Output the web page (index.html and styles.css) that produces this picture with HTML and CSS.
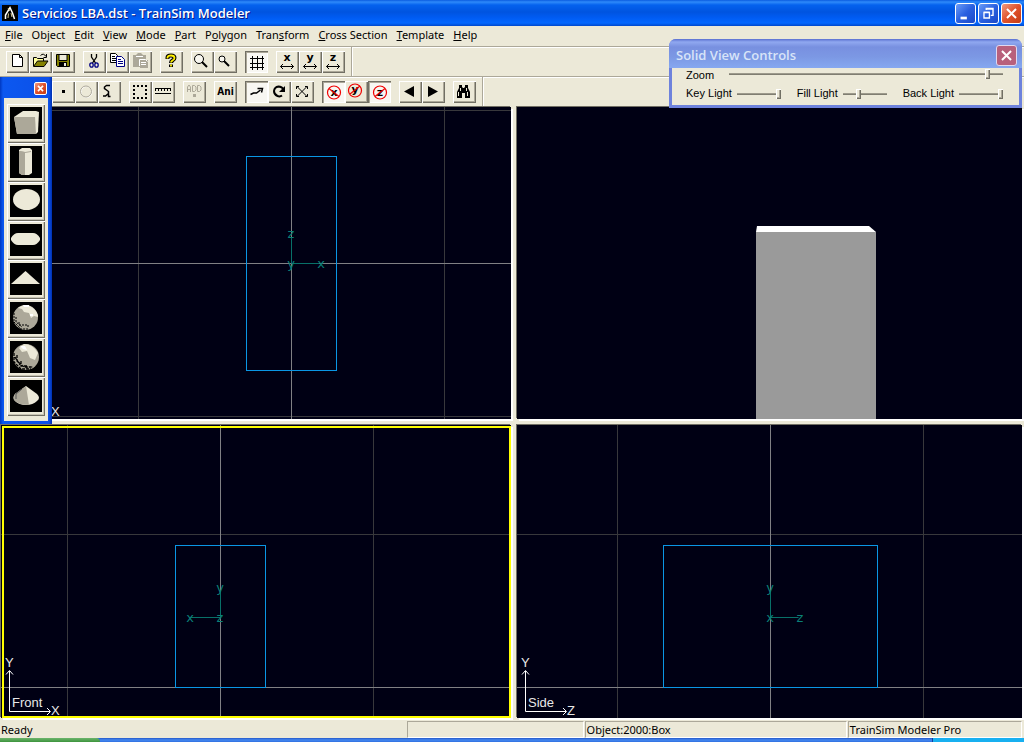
FILE: index.html
```html
<!DOCTYPE html>
<html lang="en">
<head>
<meta charset="utf-8">
<title>Servicios LBA.dst - TrainSim Modeler</title>
<link rel="stylesheet" href="styles.css">
</head>
<body>
<div class="app">
  <header class="titlebar">
    <svg class="app-icon" viewBox="0 0 16 16" aria-hidden="true"><rect width="16" height="16" fill="#000"/><path d="M3.500 14V10L8 2.500L10.500 8L12.500 14" fill="none" stroke="#fff" stroke-width="1.500"/><path d="M6 3L8 6M6.500 8.500L6 13M9 8L10 12" stroke="#d8c890" fill="none"/></svg>
    <h1 class="title">Servicios LBA.dst - TrainSim Modeler</h1>
    <div class="window-buttons">
      <button class="win-btn" aria-label="Minimize"><svg viewBox="0 0 21 21"><path d="M5 14h7v3H5z" fill="#fff"/></svg></button>
      <button class="win-btn" aria-label="Restore"><svg viewBox="0 0 21 21" fill="none" stroke="#fff"><path d="M8 6.500V5h7.500v7.500H13M8 5.500h7M5.500 9.500h6v6h-6zM5 9h7" stroke-width="1.500"/></svg></button>
      <button class="win-btn close" aria-label="Close"><svg viewBox="0 0 21 21"><path d="M5.500 5.500l10 10M15.500 5.500l-10 10" stroke="#fff" stroke-width="2.200"/></svg></button>
    </div>
  </header>

  <nav class="menubar" aria-label="Main menu">
    <button><u>F</u>ile</button><button>Object</button><button><u>E</u>dit</button><button><u>V</u>iew</button><button><u>M</u>ode</button><button><u>P</u>art</button><button>P<u>o</u>lygon</button><button>Tran<u>s</u>form</button><button><u>C</u>ross Section</button><button><u>T</u>emplate</button><button><u>H</u>elp</button>
  </nav>

  <div class="toolbar-row">
    <div class="toolbar">
      <div class="group">
        <button class="tool" aria-label="New"><svg viewBox="0 0 23 22"><path d="M6.500 3.500h7l3 3v9h-10zM13.500 3.500v3h3" fill="#fff" stroke="#000"/></svg></button>
        <button class="tool" aria-label="Open"><svg viewBox="0 0 23 22"><path d="M4.500 15V6.500h3l1 1h6V10" fill="#ffff9c" stroke="#000"/><path d="M4.500 15.500l4-5.500h10.500l-4 5.500z" fill="#848200" stroke="#000"/><path d="M11.500 4.500q3-3 5.500 1M17.500 3v3.500H14.500" fill="none" stroke="#000"/></svg></button>
        <button class="tool" aria-label="Save"><svg viewBox="0 0 23 22"><path d="M4.500 3.500h13v12h-12l-1-1z" fill="#848200" stroke="#000"/><path d="M7 3.500h8v6H7z" fill="#ece9d8" stroke="#000"/><path d="M7 11h8v5H7z" fill="#000"/><path d="M12 12h2v3h-2z" fill="#ece9d8"/></svg></button>
      </div>
      <div class="group">
        <button class="tool" aria-label="Cut"><svg viewBox="0 0 23 22" fill="none"><path d="M8.500 3v3l4 6M13.500 3v3l-4 6" stroke="#000" stroke-width="1.300"/><ellipse cx="8.500" cy="14" rx="1.700" ry="2.200" stroke="#000084" stroke-width="1.300"/><ellipse cx="13.500" cy="14" rx="1.700" ry="2.200" stroke="#000084" stroke-width="1.300"/></svg></button>
        <button class="tool" aria-label="Copy"><svg viewBox="0 0 23 22" fill="#fff"><path d="M4.500 2.500h5l2 2v7h-7z" stroke="#000"/><path d="M6 5.500h3M6 7.500h4M6 9.500h4" stroke="#000"/><path d="M10.500 5.500h5l3 3v7h-8z" stroke="#000084"/><path d="M12 8.500h3M12 10.500h5M12 12.500h5" stroke="#000084"/></svg></button>
        <button class="tool" aria-label="Paste" disabled><svg viewBox="0 0 23 22"><path d="M4 4h3l2-2h3l2 2h3v5h2v8h-8v-1H4z" fill="#aca899"/><path d="M7 5.500h7M12 11.500h5M12 13.500h5" stroke="#fff"/><path d="M10.500 15V8.500h6l2 2" fill="none" stroke="#fff"/></svg></button>
      </div>
      <div class="group">
        <button class="tool" aria-label="Help"><svg viewBox="0 0 23 22"><path d="M7.500 8V6.500Q7.500 4.500 11 4.500T14.500 7q0 1.500-2 2.500-1.500 1-1.500 2.500M11 13.500v2.500" fill="none" stroke="#000" stroke-width="4"/><path d="M7.500 7.500v-1Q7.500 4.500 11 4.500T14.500 7q0 1.500-2 2.500-1.500 1-1.500 2M11 13.500v2" fill="none" stroke="#ffef00" stroke-width="1.800"/></svg></button>
      </div>
      <div class="group">
        <button class="tool" aria-label="Zoom in"><svg viewBox="0 0 23 22"><circle cx="8" cy="8" r="4.500" fill="#f8f7f0" stroke="#000"/><path d="M11 11l5 5" stroke="#000" stroke-width="2"/></svg></button>
        <button class="tool" aria-label="Zoom out"><svg viewBox="0 0 23 22"><circle cx="8" cy="8" r="3" fill="#f8f7f0" stroke="#000"/><path d="M10 10l5 5" stroke="#000" stroke-width="2"/></svg></button>
      </div>
      <div class="group">
        <button class="tool pressed" aria-label="Grid" aria-pressed="true"><svg viewBox="0 0 23 22"><path d="M7.500 5v14M12.500 5v14M17.500 5v14M5 7.500h14M5 12.500h14M5 16.500h14" stroke="#000"/></svg></button>
      </div>
      <div class="group">
        <button class="tool" aria-label="Flip X"><svg viewBox="0 0 23 22"><text x="11" y="10" class="glyph">x</text><path class="ink" d="M4.500 15.500h13M7 13l-2.500 2.500L7 18M15 13l2.500 2.500L15 18"/></svg></button>
        <button class="tool" aria-label="Flip Y"><svg viewBox="0 0 23 22"><text x="11" y="10" class="glyph">y</text><path class="ink" d="M4.500 15.500h13M7 13l-2.500 2.500L7 18M15 13l2.500 2.500L15 18"/></svg></button>
        <button class="tool" aria-label="Flip Z"><svg viewBox="0 0 23 22"><text x="11" y="10" class="glyph">z</text><path class="ink" d="M4.500 15.500h13M7 13l-2.500 2.500L7 18M15 13l2.500 2.500L15 18"/></svg></button>
      </div>
    </div>
  </div>

  <div class="toolbar-row">
    <div class="toolbar second">
      <div class="group">
        <button class="tool" aria-label="Point"><svg viewBox="0 0 23 22"><path d="M10 9h3v3h-3z"/></svg></button>
        <button class="tool" aria-label="Circle" disabled><svg viewBox="0 0 23 22" fill="none"><circle cx="11.500" cy="11" r="5.500" stroke="#fff"/><circle cx="11" cy="10.500" r="5.500" stroke="#aca899"/></svg></button>
        <button class="tool" aria-label="Curve"><svg viewBox="0 0 23 22"><path d="M12 4.500H8.500L6.500 6v1.500l2 1.500 2 1.500v2L7.500 15H5M10.500 12v3.500h2" fill="none" stroke="#000" stroke-width="1.500"/></svg></button>
      </div>
      <div class="group">
        <button class="tool" aria-label="Select area"><svg viewBox="0 0 23 22"><path d="M4 5h14M4 17h14" fill="none" stroke="#000" stroke-width="2" stroke-dasharray="2 2"/><path d="M5 4v14M17 4v14" fill="none" stroke="#000" stroke-width="2" stroke-dasharray="2 2"/></svg></button>
        <button class="tool" aria-label="Measure"><svg viewBox="0 0 23 22"><path d="M3 7.500h16M3 12.500h16M3.500 7v3M6.500 7v3M9.500 7v3M12.500 7v3M15.500 7v3M18.500 7v3" stroke="#000"/></svg></button>
      </div>
      <div class="group">
        <button class="tool" aria-label="Add" disabled><svg viewBox="0 0 23 22" fill="none" stroke="#aca899"><path d="M4.500 11V6l1.500-2 1.500 2v5M4.500 8.500h3M9.500 4.500h2l1.500 1.500v3l-1.500 1.500h-2zM14.500 4.500h2L18 6v3l-1.500 1.500h-2z"/><path d="M10 13h3v3h-3z" fill="#aca899" stroke="none"/></svg></button>
      </div>
      <div class="group">
        <button class="tool ani">Ani</button>
      </div>
      <div class="group">
        <button class="tool pressed" aria-label="Move" aria-pressed="true"><svg viewBox="0 0 23 22"><path d="M5.500 13.500l3-1.500h3l4-3M12.500 7.500h5l-1 4" fill="none" stroke="#000" stroke-width="1.500"/></svg></button>
        <button class="tool" aria-label="Rotate"><svg viewBox="0 0 23 22"><path d="M14 14.500q-2 1.500-4.500.5Q6 13.500 6 10q.5-4 4.500-4.500Q14 5.500 16 9" fill="none" stroke="#000" stroke-width="2"/><path d="M17 5v6h-6z"/></svg></button>
        <button class="tool" aria-label="Scale"><svg viewBox="0 0 23 22"><path class="ink" d="M6 5.500l10 10M16 5.500l-10 10M5.500 8V5.500H8M14 5.500h2.500V8M5.500 13v2.500H8M14 15.500h2.500V13"/></svg></button>
      </div>
      <div class="group">
        <button class="tool pressed" aria-label="Lock X" aria-pressed="true"><svg viewBox="0 0 23 22"><text x="12" y="15" class="glyph">x</text><path class="ban" d="M7 7.500l10 8"/><circle class="ban" cx="12" cy="11.500" r="6.500"/></svg></button>
        <button class="tool" aria-label="Lock Y"><svg viewBox="0 0 23 22"><text x="10" y="12" class="glyph">y</text><path class="ban" d="M5 13l10-8"/><circle class="ban" cx="10" cy="9.500" r="6.500"/></svg></button>
        <button class="tool pressed" aria-label="Lock Z" aria-pressed="true"><svg viewBox="0 0 23 22"><text x="12" y="15" class="glyph">z</text><path class="ban" d="M7 15.500l10-8"/><circle class="ban" cx="12" cy="11.500" r="6.500"/></svg></button>
      </div>
      <div class="group">
        <button class="tool" aria-label="Previous"><svg viewBox="0 0 23 22"><path d="M5 10.500L15 5v11z"/></svg></button>
        <button class="tool" aria-label="Next"><svg viewBox="0 0 23 22"><path d="M16 10.500L6 5v11z"/></svg></button>
      </div>
      <div class="group">
        <button class="tool" aria-label="Find"><svg viewBox="0 0 23 22"><path d="M6 4h3v2l1 1h1l1-1V4h3v3l2 4v6h-5v-5H9v5H4v-6l2-4z"/><path d="M7.500 7v3M5.500 11v4M13.500 7v3M14.500 11v4" stroke="#ece9d8"/></svg></button>
      </div>
    </div>
  </div>

  <main class="views">
    <section class="view" aria-label="Top view">
      <svg viewBox="1 107 510 312" preserveAspectRatio="xMidYMid slice">
        <path class="grid-line" d="M138.500 107v312M444.500 107v312M1 110.500h510M1 416.500h510"/>
        <path class="axis-line" d="M291.500 107v312M1 263.500h510"/>
        <rect class="part" x="246.500" y="156.500" width="90" height="214"/>
        <path class="pivot" d="M291.500 238v25.500h28"/>
        <text class="pivot-label" x="291" y="238">z</text><text class="pivot-label" x="291" y="268">y</text><text class="pivot-label" x="321" y="268">x</text>
        <text class="view-label" x="51" y="416">X</text>
      </svg>
    </section>
    <section class="view" aria-label="Solid view">
      <svg viewBox="517 107 505 312" preserveAspectRatio="xMidYMid slice">
        <path d="M757 226h112l7 6H756z" fill="#fff"/><path d="M756 232h120v190H756z" fill="#9a9a9a"/>
      </svg>
    </section>
    <section class="view active" aria-label="Front view">
      <svg viewBox="1 425 510 293" preserveAspectRatio="xMidYMid slice">
        <path class="grid-line" d="M67.500 425v293M373.500 425v293M1 534.500h510"/>
        <path class="axis-line" d="M220.500 425v293M1 687.500h510"/>
        <rect class="part" x="175.500" y="545.500" width="90" height="142"/>
        <path class="pivot" d="M220.500 592v25.500h-30"/>
        <text class="pivot-label" x="220" y="592">y</text><text class="pivot-label" x="220" y="622">z</text><text class="pivot-label" x="190" y="622">x</text>
        <path class="compass" d="M9.500 671v40.500h40.500M6 674.500l3.500-4 3.500 4M47 708l3.500 3.500L47 715"/>
        <text class="view-label" x="5" y="667">Y</text><text class="view-label" x="12" y="707">Front</text><text class="view-label" x="51" y="715">X</text>
      </svg>
    </section>
    <section class="view" aria-label="Side view">
      <svg viewBox="517 425 505 293" preserveAspectRatio="xMidYMid slice">
        <path class="grid-line" d="M617.500 425v293M923.500 425v293M517 534.500h505"/>
        <path class="axis-line" d="M770.500 425v293M517 687.500h505"/>
        <rect class="part" x="663.500" y="545.500" width="214" height="142"/>
        <path class="pivot" d="M770.500 592v25.500h28"/>
        <text class="pivot-label" x="770" y="592">y</text><text class="pivot-label" x="770" y="622">x</text><text class="pivot-label" x="800" y="622">z</text>
        <path class="compass" d="M525.500 671v40.500h40.500M522 674.500l3.500-4 3.500 4M563 708l3.500 3.500L563 715"/>
        <text class="view-label" x="521" y="667">Y</text><text class="view-label" x="528" y="707">Side</text><text class="view-label" x="567" y="715">Z</text>
      </svg>
    </section>
  </main>

  <footer class="statusbar">
    <span class="status-ready">Ready</span><span class="cell progress"></span><span class="cell object">Object:2000:Box</span><span class="cell product">TrainSim Modeler Pro</span>
  </footer>
  <div class="taskbar"><span class="start"></span><span class="tasks"></span><span class="tray"></span></div>

  <aside class="palette" aria-label="Shapes">
    <div class="palette-title"><button class="win-btn close small" aria-label="Close shapes"><svg viewBox="0 0 13 13"><path d="M3.500 3.500l6 6M9.500 3.500l-6 6" stroke="#fff" stroke-width="2"/></svg></button></div>
    <div class="shapes">
      <button class="shape" aria-label="Box"><svg viewBox="0 0 32 32"><path d="M4 10l9-6h13l3 1-1 20-2 2H7z" fill="#ece9d8"/><path d="M4 10h21l1 17H7z" fill="#aca899"/></svg></button>
      <button class="shape" aria-label="Cylinder"><svg viewBox="0 0 32 32"><path d="M9 4l3-2h8l2 2v23l-3 2h-7l-3-2z" fill="#ece9d8"/><path d="M9 5l6 1v23h-3l-3-2z" fill="#aca899"/><path d="M10 5.500l5 1 6-1" fill="none" stroke="#aca899"/></svg></button>
      <button class="shape" aria-label="Disc"><svg viewBox="0 0 32 32"><ellipse cx="16.500" cy="14.500" rx="13.500" ry="10.500" fill="#ece9d8"/></svg></button>
      <button class="shape" aria-label="Polygon"><svg viewBox="0 0 32 32"><path d="M8 9h15q4 0 7 5v2q-3 5-7 5H8q-4 0-7-5v-2q3-5 7-5z" fill="#ece9d8"/></svg></button>
      <button class="shape" aria-label="Triangle"><svg viewBox="0 0 32 32"><path d="M1 21L15.500 8 30 21z" fill="#ece9d8"/></svg></button>
      <button class="shape" aria-label="Sphere"><svg viewBox="0 0 32 32"><circle cx="15.500" cy="15.500" r="12.500" fill="#aca899"/><path d="M8 6q8-6 15 0 5 4 5 9l-4-1-3 2-2-5-5-1-2-3z" fill="#ece9d8"/><path d="M13 3h6v2h-5zM20 12h3v2h-3z" fill="#fff"/><path d="M4 11v9l7 7h7M6 15v5l6 5M9 20v3h9v3" fill="none" stroke="#000" stroke-dasharray="2 1"/></svg></button>
      <button class="shape" aria-label="Geosphere"><svg viewBox="0 0 32 32"><circle cx="16" cy="16" r="13" fill="#aca899"/><path d="M9 7l5-4q9 0 14 9l-3 7-5-2-3-7-5 1z" fill="#ece9d8"/><path d="M10 5h5l2 4-4-1z" fill="#fff"/><path d="M4 12v9l7 7h10M7 14v6l7 6h9M5 16l5 8M11 20v5h6v3M4 8l3-3" fill="none" stroke="#000" stroke-width="1.300" stroke-dasharray="3 1"/></svg></button>
      <button class="shape" aria-label="Cone"><svg viewBox="0 0 32 32"><path d="M16 6l11 8q4 4 0 7-4 4-11 4T5 21q-3-3 0-7z" fill="#ece9d8"/><path d="M16 6L5 14q-3 4 0 7 4 4 14 4z" fill="#aca899"/><path d="M12 9l-6 5v5" stroke="#555" fill="none"/></svg></button>
    </div>
  </aside>

  <aside class="controls" aria-label="Solid View Controls">
    <div class="controls-title"><h2>Solid View Controls</h2><button class="win-btn muted" aria-label="Close controls"><svg viewBox="0 0 21 21"><path d="M5.500 5.500l10 10M15.500 5.500l-10 10" stroke="#fff" stroke-width="2.200"/></svg></button></div>
    <div class="controls-body">
      <div class="control-row zoom"><label for="zoom">Zoom</label><input id="zoom" type="range" value="95"></div>
      <div class="control-row lights">
        <div class="light"><label for="key">Key Light</label><input id="key" type="range" value="100"></div>
        <div class="light"><label for="fill">Fill Light</label><input id="fill" type="range" value="33"></div>
        <div class="light"><label for="back">Back Light</label><input id="back" type="range" value="100"></div>
      </div>
    </div>
  </aside>
</div>
</body>
</html>
```
FILE: styles.css
```css
* { box-sizing: border-box; }

body {
  margin: 0;
  background: #ece9d8;
  color: #000;
  font: 11px/14px "Noto Sans", "Liberation Sans", sans-serif;
}

button {
  margin: 0;
  padding: 0;
  border: 0;
  background: none;
  color: inherit;
  font: inherit;
}

svg { display: block; }

.app {
  position: relative;
  display: flex;
  flex-direction: column;
  height: 100vh;
  overflow: hidden;
}

/* Title bar */
.titlebar {
  flex: none;
  display: flex;
  align-items: center;
  gap: 4px;
  height: 26px;
  padding: 0 2px;
  background: linear-gradient(#0a5ce0 0, #2e8afa 2px, #0462ee 5px, #0054e0 12px, #005cf4 18px, #0468fe 23px, #0048cc 26px);
}

.app-icon { width: 16px; height: 16px; }

.title {
  flex: 1;
  margin: 0;
  color: #fff;
  font: 600 13px/16px "Open Sans", sans-serif;
  text-shadow: 1px 1px 0 #0a1883;
}

.window-buttons { display: flex; gap: 2px; }

.win-btn {
  width: 21px;
  height: 21px;
  border: 1px solid #fff;
  border-radius: 3px;
  background: linear-gradient(135deg, #6a9cf8, #2a60e0 50%, #1a48c8);
}

.win-btn svg { width: 19px; height: 19px; }

.win-btn.close { background: linear-gradient(135deg, #f09a80, #e0522c 50%, #c43c14); }

.win-btn.muted { background: #b8607c; border-color: #e0d8f0; }

.win-btn.small { width: 13px; height: 13px; border-radius: 2px; }

.win-btn.small svg { width: 11px; height: 11px; }

/* Menu */
.menubar {
  flex: none;
  display: flex;
  gap: 9px;
  height: 20px;
  padding: 0 5px 2px;
}

.menubar u { text-underline-offset: 1px; }

/* Toolbars */
.toolbar-row {
  flex: none;
  display: flex;
  height: 30px;
  border-top: 1px solid #aca899;
  box-shadow: inset 0 1px #fff;
}

.toolbar {
  display: flex;
  align-items: flex-start;
  gap: 8px;
  padding: 4px 6px 0;
  border-right: 1px solid #aca899;
  box-shadow: 1px 0 #fff;
}

.toolbar.second { padding-left: 52px; }

.group { display: flex; }

.tool {
  width: 23px;
  height: 22px;
  box-shadow: inset 1px 1px #fff, inset -1px -1px #716f64, inset -2px -2px #aca899;
}

.tool svg { width: 23px; height: 22px; }

.tool.pressed {
  background: #f8f7f2;
  box-shadow: inset 1px 1px #716f64, inset 2px 2px #aca899, inset -1px -1px #fff;
}

.tool.ani { font: bold 10px/20px "DejaVu Sans Condensed", "DejaVu Sans", sans-serif; }

.glyph { font: bold 11px "DejaVu Sans", sans-serif; text-anchor: middle; }

.ink { fill: none; stroke: #000; }

.ban { fill: none; stroke: #f00000; stroke-width: 1.200; }

/* Viewports */
.views {
  flex: 1;
  min-height: 0;
  display: grid;
  grid-template-columns: 510fr 505fr;
  grid-template-rows: 312fr 293fr;
  gap: 6px;
  margin-top: 1px;
  padding: 0 2px 0 1px;
}

.view {
  position: relative;
  min-width: 0;
  min-height: 0;
  background: #000014;
  box-shadow: 2px 2px #fff, -1px -1px #716f64;
}

.view svg { width: 100%; height: 100%; }

.view.active::after {
  content: "";
  position: absolute;
  inset: 1px 0 0 1px;
  border: 2px solid #ff0;
}

.grid-line { fill: none; stroke: #38383c; }
.axis-line { fill: none; stroke: #808084; }
.part { fill: none; stroke: #0a96e4; }
.pivot { fill: none; stroke: #087068; }
.pivot-label { fill: #0a8078; font: 13px "DejaVu Sans", sans-serif; text-anchor: middle; }
.compass { fill: none; stroke: #fff; }
.view-label { fill: #e8e8e8; font: 13px "Liberation Sans", sans-serif; }

/* Status bar */
.statusbar {
  flex: none;
  display: grid;
  grid-template-columns: 405fr 176fr 262fr 174fr;
  gap: 1px;
  height: 20px;
  padding: 3px 2px 1px 1px;
}

.cell {
  padding: 1px 0 0 1px;
  border: 1px solid;
  border-color: #aca899 #fff #fff #aca899;
  white-space: nowrap;
}

.status-ready { padding-top: 2px; }

.taskbar { flex: none; display: flex; height: 4px; background: #2a6ae0; }
.start { width: 100px; border-radius: 0 4px 0 0; background: linear-gradient(#6cb46c, #3c943c); }
.tasks { flex: 1; background: linear-gradient(#2458c8, #4488f0 2px, #3070e0); }
.tray { width: 92px; border-left: 1px solid #1040a0; background: #18b0f0; }

/* Shape palette */
.palette {
  position: absolute;
  top: 77px;
  left: 0;
  width: 52px;
  padding: 0 4px 3px;
  background: linear-gradient(90deg, #0038c0, #0c58f0 3px, #0c50e8 49px, #0030b0);
}

.palette-title {
  display: flex;
  align-items: center;
  justify-content: flex-end;
  height: 21px;
  padding: 2px 1px 0 0;
}

.shapes {
  display: flex;
  flex-direction: column;
  padding: 6px 3px 5px;
  background: #ece9d8;
}

.shape {
  height: 39px;
  padding: 3px 3px 4px;
  box-shadow: inset 1px 1px #fff, inset -1px -1px #716f64, inset -2px -2px #c8c4b4;
}

.shape svg { width: 32px; height: 32px; background: #000; }

/* Solid view controls */
.controls {
  position: absolute;
  top: 39px;
  right: 2px;
  width: 353px;
  padding: 0 3px 3px;
  border-radius: 7px 7px 0 0;
  background: #6e82dc;
}

.controls-title {
  display: flex;
  align-items: center;
  justify-content: space-between;
  height: 29px;
  margin: 0 -3px;
  padding: 3px 5px 0 7px;
  border-radius: 7px 7px 0 0;
  background: linear-gradient(#5a70d0, #90a8f0 3px, #7890e0 8px, #7c98e4 18px, #86a8f0);
}

.controls-title h2 {
  margin: 0;
  color: #d8e4f8;
  font: 600 13px/16px "Open Sans", sans-serif;
}

.controls-body {
  height: 37px;
  padding: 0 16px 0 14px;
  background: #ece9d8;
  font-family: "Liberation Sans", sans-serif;
}

.control-row { display: flex; height: 18px; }
.control-row.zoom { gap: 15px; }
.control-row.zoom input { flex: 1; }
.control-row.lights { justify-content: space-between; }
.light { display: flex; gap: 5px; }
.light input { width: 44px; }

input[type="range"] {
  appearance: none;
  min-width: 0;
  height: 12px;
  margin: 0;
  background: linear-gradient(#aca899, #716f64) 0 5px / 100% 2px no-repeat;
}

.light input[type="range"] { margin-top: 2px; }

input[type="range"]::-webkit-slider-thumb {
  appearance: none;
  width: 5px;
  height: 10px;
  background: #ece9d8;
  box-shadow: inset 1px 1px #fff, inset -1px -1px #716f64, inset -2px -2px #aca899;
}
```
